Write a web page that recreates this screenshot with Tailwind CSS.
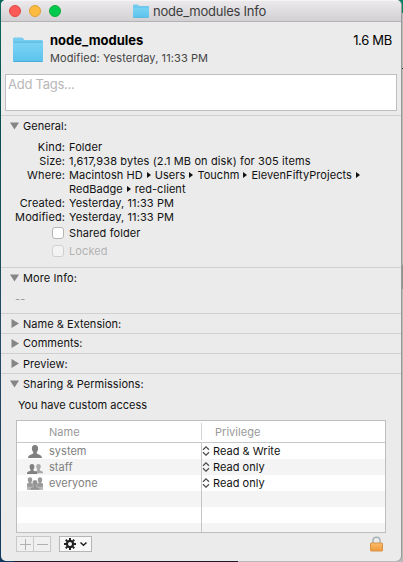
<!DOCTYPE html>
<html lang="en">
<head>
<meta charset="utf-8">
<title>node_modules Info</title>
<script src="https://cdn.jsdelivr.net/npm/@tailwindcss/browser@4"></script>
</head>
<body class="w-[403px] h-[562px] overflow-hidden font-['Inter','Liberation_Sans',sans-serif] text-[11px] leading-[14px] tracking-[0.1px] text-[#111]">
<svg width="0" height="0" class="absolute">
  <defs>
    <linearGradient id="fold" x1="0" y1="0" x2="0" y2="1"><stop offset="0" stop-color="#7bd3f4"/><stop offset="1" stop-color="#5cc3ec"/></linearGradient>
    <linearGradient id="gold" x1="0" y1="0" x2="0" y2="1"><stop offset="0" stop-color="#fcbc68"/><stop offset="1" stop-color="#f09a3c"/></linearGradient>
    <symbol id="folder" viewBox="0 0 30 25">
      <path d="M0 2Q0 .5 1.500 .5H8.500Q9.500 .5 10.300 1.500L11.500 3H28.500Q30 3 30 4.500V23.500Q30 25 28.500 25H1.500Q0 25 0 23.500Z" fill="#76cdf0"/>
      <path d="M0 5.500H30V23.500Q30 24.500 28.500 24.500H1.500Q0 24.500 0 23.500Z" fill="url(#fold)"/>
      <path d="M.5 5.200H29.500" stroke="#4eb4dd" stroke-width=".8"/>
      <path d="M.5 24.500H29.500" stroke="#4aa9d2" stroke-width=".9"/>
    </symbol>
    <symbol id="down" viewBox="0 0 9 8"><path d="M0 .5H9L4.500 7.500Z" fill="#858585"/></symbol>
    <symbol id="right" viewBox="0 0 8 9"><path d="M.5 0V9L8 4.500Z" fill="#858585"/></symbol>
    <symbol id="crumb" viewBox="0 0 4 6"><path d="M0 0V6L4 3Z" fill="#111"/></symbol>
    <symbol id="updown" viewBox="0 0 8 10"><path d="M1 3.700L4 .9L7 3.700M1 6.300L4 9.100L7 6.300" fill="none" stroke="#4a4a4a" stroke-width="1.200"/></symbol>
    <symbol id="bust" viewBox="0 0 14 13"><path d="M7 0C9.300 0 10.200 1.600 10.100 3.800C10 5.600 9.300 6.500 8.800 7.200V8.600C9.500 9.600 13.800 9.500 14 13H0C.2 9.500 4.500 9.600 5.200 8.600V7.200C4.700 6.500 4 5.600 3.900 3.800C3.800 1.600 4.700 0 7 0Z"/></symbol>
  </defs>
</svg>
<div class="relative w-[403px] h-[562px] bg-[linear-gradient(to_right,transparent_50%,#b9b9b9_50%),linear-gradient(#0b6b5c,#0a4f50_20%,#264c66_60%,#123a5e)]">
  <div class="absolute right-0 top-0 w-[6px] h-[13px] bg-[#008467]"></div>
  <div class="absolute right-0 top-[68px] w-[2px] h-px bg-[#333]"></div>
  <div class="absolute right-0 top-[265px] w-[2px] h-[24px] bg-[#929292]"></div>
  <div class="absolute left-[14px] bottom-0 w-[224px] h-[3px] bg-[#21152b]"></div>
  <main class="absolute left-px top-0 w-[400px] h-[561px] rounded-[5px] overflow-hidden bg-[#ebebeb] flex flex-col shadow-[1px_0_0_#999]">
    <header class="h-[22px] shrink-0 flex bg-linear-to-b from-[#ebe9eb] to-[#d2d0d2] border-b border-[#b4b2b4] border-t border-t-[#f5f5f5]">
      <div class="flex gap-2 pt-1 pl-2 w-[132px]">
        <i class="size-3 rounded-full bg-[#fc5b57] border border-[#df4744]"></i>
        <i class="size-3 rounded-full bg-[#fdbc40] border border-[#de9f34]"></i>
        <i class="size-3 rounded-full bg-[#00ca4e] border border-[#12ac38]"></i>
      </div>
      <svg class="w-4 h-[14px] mt-[3px]"><use href="#folder" width="16" height="14"/></svg>
      <h1 class="ml-1 mt-[2px] text-[13px] leading-4 tracking-[-0.22px] text-[#3c3c3c]">node_modules Info</h1>
    </header>
    <section class="h-[52px] shrink-0 flex pl-3 pr-[9px]">
      <svg class="w-[30px] h-[25px] mt-[15px]"><use href="#folder" width="30" height="25"/></svg>
      <div class="ml-[7px] mt-[10px] flex-1">
        <h2 class="text-[13px] leading-4 font-bold tracking-[0px] text-black">node_modules</h2>
        <p class="mt-[3px] text-[#444]">Modified: Yesterday, 11:33 PM</p>
      </div>
      <div class="mt-[10px] text-[13px] leading-4 tracking-[-0.3px] text-black">1.6 MB</div>
    </section>
    <div class="ml-1 w-[392px] h-[37px] shrink-0 bg-white border border-[#bebebe] pl-[2px] pt-[1px] text-[13px] leading-4 tracking-[-0.25px] text-[#b8b8b8]">Add Tags...</div>
    <section class="mt-1 h-[152px] shrink-0 border-t border-[#d0d0d0]">
      <h3 class="flex items-center pl-[9px] pt-[3px] gap-1 tracking-[0.03px]"><svg class="w-[9px] h-2"><use href="#down" width="9" height="8"/></svg>General:</h3>
      <div class="mt-[7px] grid grid-cols-[64px_1fr] gap-x-1 auto-rows-[14px] whitespace-nowrap">
        <b class="font-normal text-right">Kind:</b><span>Folder</span>
        <b class="font-normal text-right">Size:</b><span class="tracking-[0.12px]">1,617,938 bytes (2.1 MB on disk) for 305 items</span>
        <b class="font-normal text-right">Where:</b>
        <span class="flex items-center gap-1 tracking-[0.05px]">Macintosh HD<svg class="w-1 h-1.5"><use href="#crumb" width="4" height="6"/></svg>Users<svg class="w-1 h-1.5"><use href="#crumb" width="4" height="6"/></svg>Touchm<svg class="w-1 h-1.5"><use href="#crumb" width="4" height="6"/></svg>ElevenFiftyProjects<svg class="w-1 h-1.5"><use href="#crumb" width="4" height="6"/></svg></span>
        <b></b><span class="flex items-center gap-1 tracking-[0.05px]">RedBadge<svg class="w-1 h-1.5"><use href="#crumb" width="4" height="6"/></svg>red-client</span>
        <b class="font-normal text-right">Created:</b><span>Yesterday, 11:33 PM</span>
        <b class="font-normal text-right">Modified:</b><span>Yesterday, 11:33 PM</span>
      </div>
      <label class="mt-[2px] ml-[51px] flex items-center gap-[5px]"><i class="size-3 rounded-[3px] bg-white border border-[#b5b5b5]"></i>Shared folder</label>
      <label class="mt-1 ml-[51px] flex items-center gap-[5px] text-[#b3b3b3]"><i class="size-3 rounded-[3px] bg-[#f3f3f3] border border-[#d0d0d0]"></i>Locked</label>
    </section>
    <section class="h-[46px] shrink-0 border-t border-[#d0d0d0]">
      <h3 class="flex items-center pl-[9px] pt-[3px] gap-1"><svg class="w-[9px] h-2"><use href="#down" width="9" height="8"/></svg>More Info:</h3>
      <p class="pl-[14px] mt-[7px] text-[#999]">--</p>
    </section>
    <h3 class="h-5 shrink-0 border-t border-[#d0d0d0] flex items-start pl-[10px] pt-[3px] gap-1 tracking-[0.03px]"><svg class="w-2 h-[9px] mt-[2px]"><use href="#right" width="8" height="9"/></svg>Name &amp; Extension:</h3>
    <h3 class="h-5 shrink-0 border-t border-[#d0d0d0] flex items-start pl-[10px] pt-[2px] gap-1 tracking-[0.03px]"><svg class="w-2 h-[9px] mt-[3px]"><use href="#right" width="8" height="9"/></svg>Comments:</h3>
    <h3 class="h-5 shrink-0 border-t border-[#d0d0d0] flex items-start pl-[10px] pt-[3px] gap-1 tracking-[0.03px]"><svg class="w-2 h-[9px] mt-[2px]"><use href="#right" width="8" height="9"/></svg>Preview:</h3>
    <section class="flex-1 border-t border-[#d0d0d0]">
      <h3 class="flex items-center pl-[9px] pt-[3px] gap-1 tracking-[0.05px]"><svg class="w-[9px] h-2"><use href="#down" width="9" height="8"/></svg>Sharing &amp; Permissions:</h3>
      <p class="pl-[17px] mt-[7px] tracking-[0px]">You have custom access</p>
      <div class="ml-[15px] mt-2 w-[370px] h-[113px] overflow-hidden bg-white border border-[#bebebe] grid grid-cols-[184px_1px_1fr] grid-rows-[22px_16px_16px_16px_16px_16px_9px] tracking-[0.03px] text-[#808080]">
        <div class="pl-8 pt-1 border-b border-[#c8c8c8] text-[#999]">Name</div><div class="border-b border-[#c8c8c8] pt-[2px] pb-[2px]"><div class="h-full bg-[#d4d4d4]"></div></div><div class="pl-[13px] pt-1 border-b border-[#c8c8c8] text-[#999]">Privilege</div>
        <div class="pl-[10px] flex items-center gap-2"><svg class="w-[14px] h-[13px] text-[#808080] ml-px -mr-px" fill="currentColor"><use href="#bust" width="14" height="13"/></svg>system</div><div class="bg-[#c4c4c4]"></div><div class="flex items-center gap-[3px] text-[#111]"><svg class="w-2 h-[10px]"><use href="#updown" width="8" height="10"/></svg>Read &amp; Write</div>
        <div class="pl-[10px] flex items-center gap-[6px] bg-[#f4f4f4]"><svg class="w-4 h-[10px] mt-[3px]"><use href="#bust" x="6" y="0" width="11" height="9.500" fill="#a8a8a8"/><use href="#bust" x="-1" y="0" width="12" height="10" fill="#808080"/></svg>staff</div><div class="bg-[#c4c4c4]"></div><div class="flex items-center gap-[3px] bg-[#f4f4f4] text-[#111]"><svg class="w-2 h-[10px]"><use href="#updown" width="8" height="10"/></svg>Read only</div>
        <div class="pl-[10px] flex items-center gap-[6px]"><svg class="w-4 h-[13px]"><path d="M0 6H16V13H0Z" fill="#b8b8b8"/><use href="#bust" x="-2" y="0" width="10" height="10" fill="#999"/><use href="#bust" x="8" y="0" width="10" height="10" fill="#999"/><use href="#bust" x="2.500" y="3" width="11" height="10" fill="#929292" stroke="#d5d5d5" stroke-width=".6"/></svg>everyone</div><div class="bg-[#c4c4c4]"></div><div class="flex items-center gap-[3px] text-[#111]"><svg class="w-2 h-[10px]"><use href="#updown" width="8" height="10"/></svg>Read only</div>
        <div class="bg-[#f4f4f4]"></div><div class="bg-[#c4c4c4]"></div><div class="bg-[#f4f4f4]"></div>
        <div></div><div class="bg-[#c4c4c4]"></div><div></div>
        <div class="bg-[#f4f4f4]"></div><div class="bg-[#c4c4c4]"></div><div class="bg-[#f4f4f4]"></div>
      </div>
      <footer class="flex ml-[15px] mr-[18px] mt-[3px]">
        <div class="w-[35px] h-4 border border-[#c9c9c9] bg-[#f0f0f0] flex">
          <svg class="w-[17px] h-[14px] border-r border-[#c9c9c9]"><path d="M3 7.500H14M8.500 2V13" stroke="#b0b0b0"/></svg>
          <svg class="w-4 h-[14px]"><path d="M3 7.500H14" stroke="#b0b0b0"/></svg>
        </div>
        <div class="ml-2 w-[33px] h-4 border border-[#b5b5b5] bg-[#f8f8f8]">
          <svg class="w-[31px] h-[14px]"><g fill="none" stroke="#222"><circle cx="10" cy="7" r="3.100" stroke-width="2.200"/><path d="M10 1V3M10 11V13M4 7H6M14 7H16M5.760 2.760L7.200 4.200M12.800 9.800L14.240 11.240M5.760 11.240L7.200 9.800M12.800 4.200L14.240 2.760" stroke-width="2"/><path d="M20.500 5.500L23.500 8.300L26.500 5.500" stroke-width="1.500"/></g></svg>
        </div>
        <svg class="w-[13px] h-4 ml-auto"><path d="M3 8V4.500C3 .2 10 .2 10 4.500V8" fill="none" stroke="#a9b0b4" stroke-width="1.500"/><rect x=".5" y="7" width="12" height="8" rx=".5" fill="url(#gold)" stroke="#d8934a"/></svg>
      </footer>
    </section>
  </main>
</div>
</body>
</html>
